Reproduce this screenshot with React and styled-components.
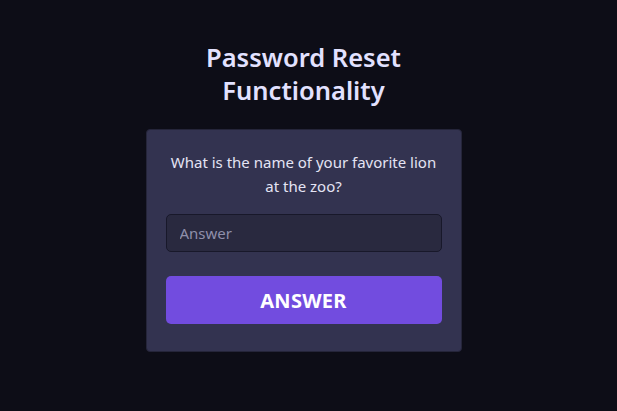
import React from 'react'
import styled, { createGlobalStyle } from 'styled-components'

const GlobalStyle = createGlobalStyle`
  html, body {
    margin: 0;
    padding: 0;
    background: #0d0d17;
  }
  body {
    font-family: "Noto Sans", "Open Sans", sans-serif;
  }
`

const Page = styled.main`
  min-height: 411px;
  display: flex;
  flex-direction: column;
  align-items: center;
  padding: 41px 10px 0 0;
  box-sizing: border-box;
`

const Title = styled.h1`
  margin: 0 0 22px;
  font-size: 25.5px;
  line-height: 33px;
  font-weight: 600;
  color: #e2e1ff;
  text-align: center;
  width: 240px;
`

const Card = styled.form`
  width: 316px;
  box-sizing: border-box;
  background: #333350;
  border: 1px solid #25253a;
  border-radius: 4px;
  padding: 20px 19px 27px;
  display: flex;
  flex-direction: column;
`

const Question = styled.p`
  margin: 0 0 16px;
  font-size: 15px;
  line-height: 24px;
  color: #e4e4f4;
  text-align: center;
`

const Input = styled.input`
  height: 38px;
  box-sizing: border-box;
  padding: 0 13px;
  background: #29293f;
  border: 1px solid #18182a;
  border-radius: 5px;
  font-family: inherit;
  font-size: 15px;
  color: #e4e4f4;
  outline: none;

  &::placeholder {
    color: #8f8fab;
  }
`

const Submit = styled.button`
  margin-top: 24px;
  height: 48px;
  border: none;
  border-radius: 5px;
  background: #724cdf;
  color: #ffffff;
  font-family: inherit;
  font-size: 20px;
  font-weight: 700;
  letter-spacing: 0.3px;
  cursor: pointer;
`

export default function App() {
  return (
    <>
      <GlobalStyle />
      <Page>
        <Title>Password Reset Functionality</Title>
        <Card onSubmit={e => e.preventDefault()}>
          <Question>What is the name of your favorite lion at the zoo?</Question>
          <Input placeholder="Answer" />
          <Submit type="submit">ANSWER</Submit>
        </Card>
      </Page>
    </>
  )
}
